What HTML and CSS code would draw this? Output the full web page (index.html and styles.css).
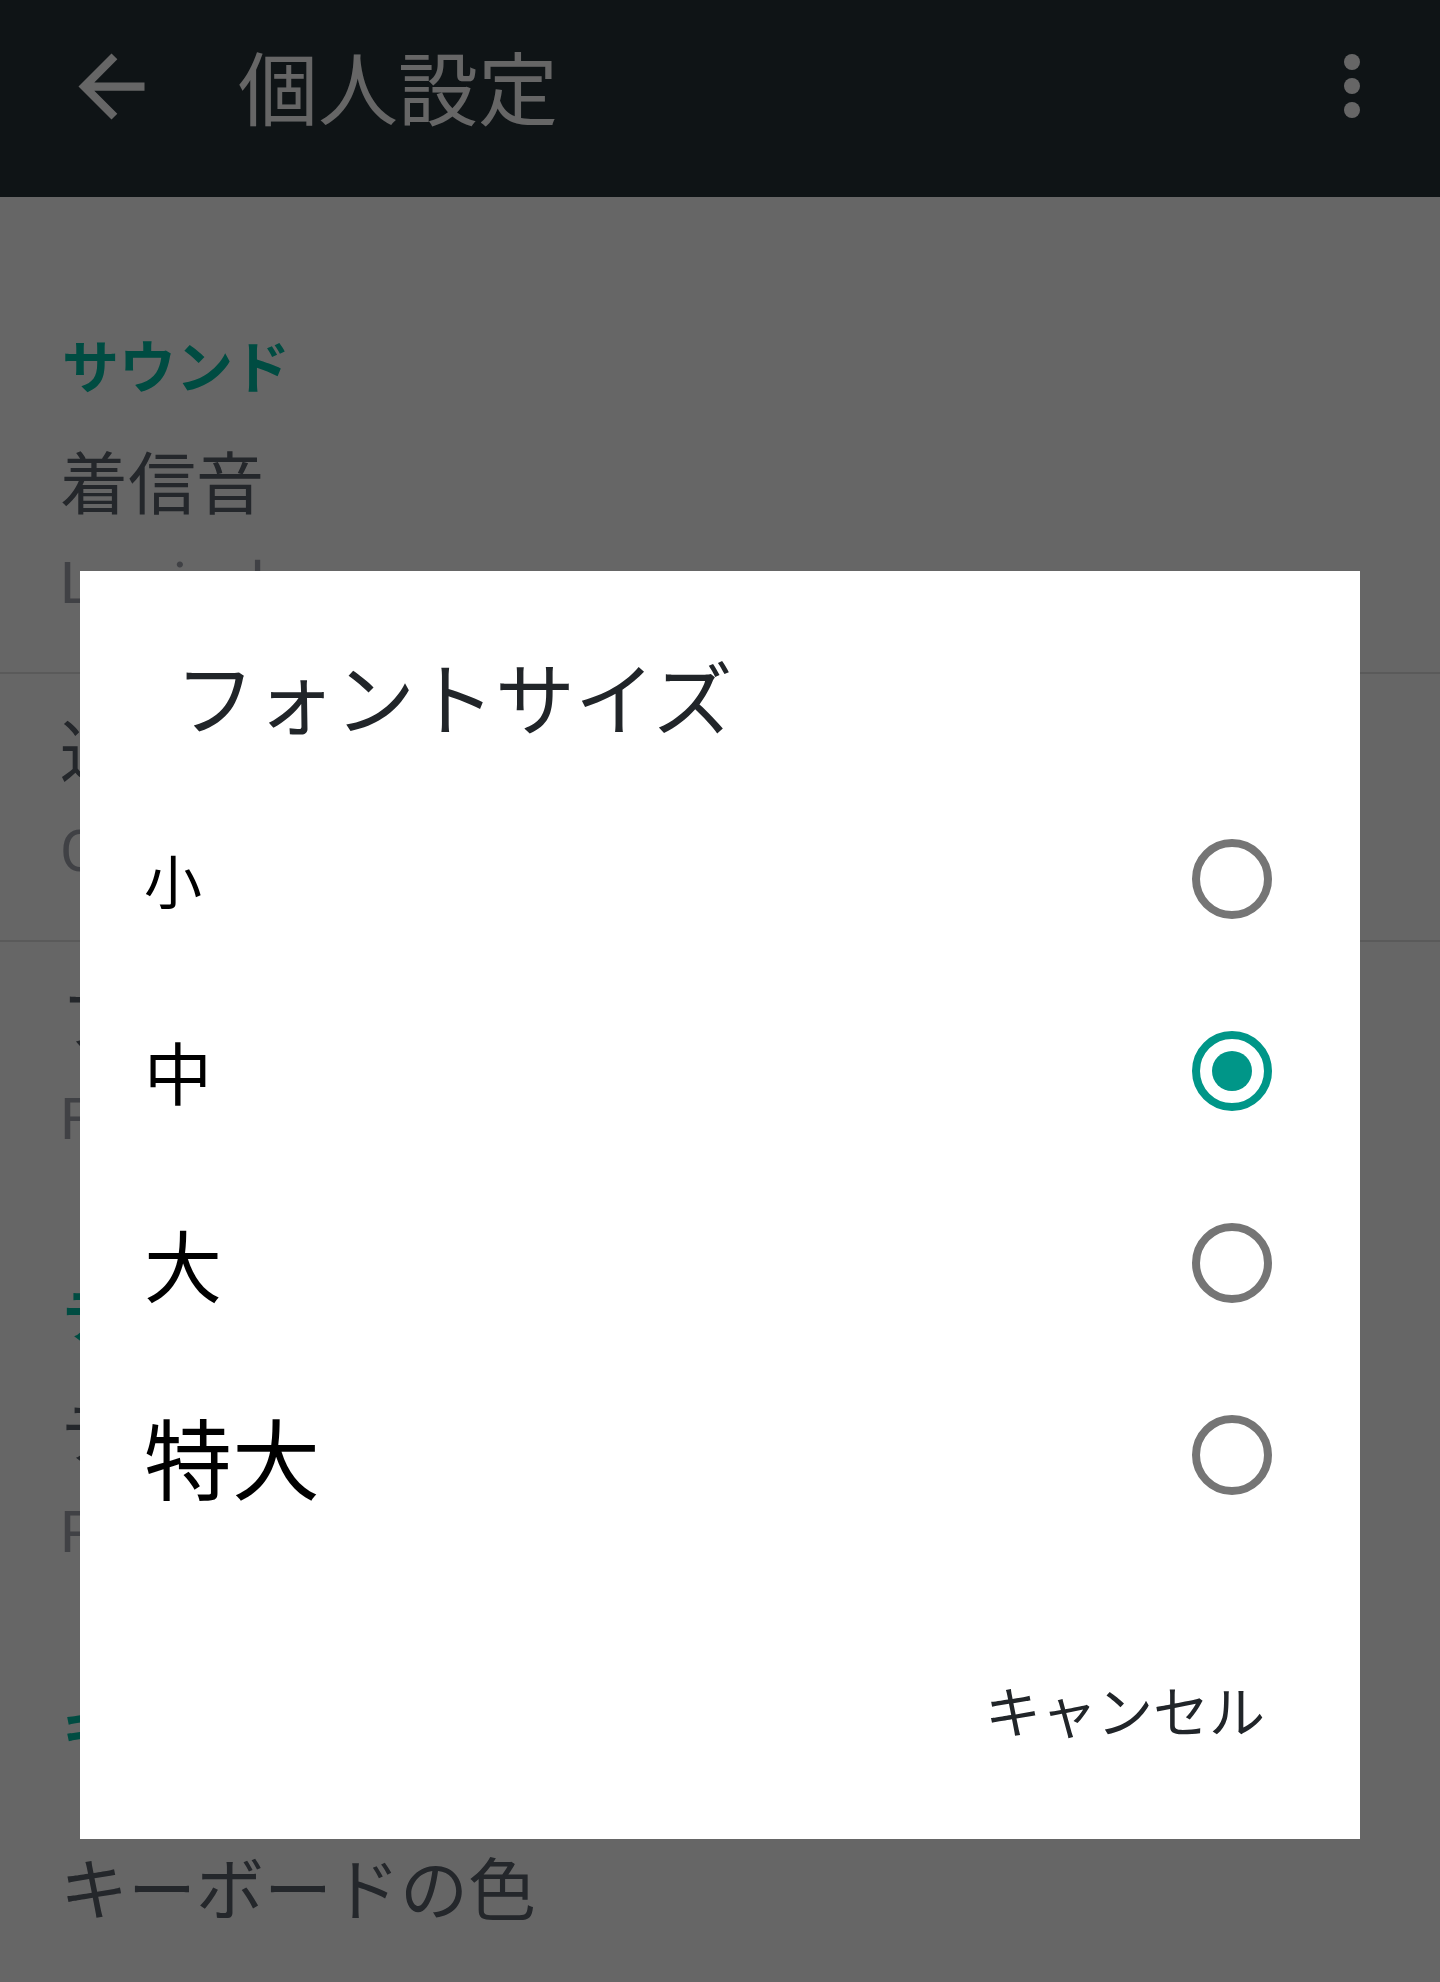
FILE: index.html
```html
<!DOCTYPE html>
<html lang="ja">
<head>
    <meta charset="UTF-8">
    <meta name="viewport" content="width=device-width, initial-scale=1.0">
    <title>個人設定</title>
    <link rel="stylesheet" href="styles.css">
</head>
<body>
    <header class="toolbar">
        <svg class="toolbar-back" viewBox="0 0 24 24"><path d="M20 11H7.83l5.59-5.59L12 4l-8 8 8 8 1.41-1.41L7.83 13H20v-2z"/></svg>
        <h1 class="toolbar-title">個人設定</h1>
        <div class="toolbar-menu"><span></span><span></span><span></span></div>
    </header>

    <main class="prefs">
        <section class="pref-group">
            <h2 class="pref-group-title">サウンド</h2>
            <div class="pref">
                <div class="pref-title">着信音</div>
                <div class="pref-summary">Luminal</div>
            </div>
            <div class="pref">
                <div class="pref-title">通知音</div>
                <div class="pref-summary">Orion</div>
            </div>
            <div class="pref">
                <div class="pref-title">フォントサイズ</div>
                <div class="pref-summary">Font size</div>
            </div>
        </section>

        <section class="pref-group">
            <h2 class="pref-group-title">テーマ</h2>
            <div class="pref">
                <div class="pref-title">テーマ</div>
                <div class="pref-summary">Pixel</div>
            </div>
        </section>

        <section class="pref-group">
            <h2 class="pref-group-title">キーボード</h2>
            <div class="pref pref-spaced">
                <div class="pref-title">キーボードの色</div>
            </div>
        </section>
    </main>

    <div class="scrim">
        <div class="dialog">
            <h3 class="dialog-title">フォントサイズ</h3>
            <ul class="choices">
                <li class="choice"><span class="choice-label size-s">小</span><span class="radio"></span></li>
                <li class="choice"><span class="choice-label size-m">中</span><span class="radio checked"></span></li>
                <li class="choice"><span class="choice-label size-l">大</span><span class="radio"></span></li>
                <li class="choice"><span class="choice-label size-xl">特大</span><span class="radio"></span></li>
            </ul>
            <div class="dialog-actions">
                <button class="dialog-btn">キャンセル</button>
            </div>
        </div>
    </div>
</body>
</html>
```

FILE: styles.css
```css
:root {
    --bar: #263238;
    --accent: #00bfa5;
    --radio-on: #009688;
    --radio-off: #757575;
    --ink: #212529;
}

body {
    margin: 0;
    height: 1982px;
    overflow: hidden;
    background: #fff;
    font-family: "Noto Sans CJK JP", "Noto Sans", sans-serif;
}

/* app bar */
.toolbar {
    display: flex;
    align-items: center;
    height: 197px;
    box-sizing: border-box;
    padding: 0 80px 25px 62px;
    background: var(--bar);
    color: #fff;
}

.toolbar-back {
    width: 99px;
    height: 99px;
    flex: none;
    fill: #fff;
}

.toolbar-title {
    flex: 1;
    margin: 0 0 5px 77px;
    font-size: 80px;
    font-weight: 400;
    line-height: 100px;
}

.toolbar-menu {
    display: flex;
    flex-direction: column;
    gap: 8px;
}

.toolbar-menu span {
    width: 16px;
    height: 16px;
    border-radius: 50%;
    background: #fff;
}

/* preference list */
.prefs {
    padding-top: 64px;
}

.pref-group-title {
    margin: 62px 0 3px;
    padding-left: 62px;
    font-size: 57px;
    font-weight: 700;
    line-height: 80px;
    color: var(--accent);
}

.pref {
    height: 268px;
    box-sizing: border-box;
    padding: 34px 0 0 60px;
    border-bottom: 2px solid #e0e0e0;
}

.pref-group .pref:last-child {
    border-bottom-color: transparent;
}

.pref-spaced {
    margin-top: 47px;
}

.pref-title {
    font-size: 68px;
    line-height: 80px;
    color: #5a616b;
}

.pref-summary {
    margin-top: 28px;
    font-family: Roboto, "Noto Sans CJK JP", sans-serif;
    font-size: 58px;
    line-height: 70px;
    color: #a0a4ad;
}

/* dialog */
.scrim {
    position: fixed;
    inset: 0;
    padding-top: 571px;
    background: rgba(0, 0, 0, 0.6);
}

.dialog {
    width: 1280px;
    height: 1268px;
    box-sizing: border-box;
    margin: 0 auto;
    padding-top: 73px;
    background: #fff;
}

.dialog-title {
    margin: 0;
    padding-left: 95px;
    font-size: 80px;
    font-weight: 400;
    line-height: 100px;
    color: var(--ink);
}

.choices {
    list-style: none;
    margin: 39px 0 0;
    padding: 0;
}

.choice {
    display: flex;
    align-items: center;
    justify-content: space-between;
    height: 192px;
    padding: 0 88px 0 64px;
}

.choice-label {
    line-height: 1;
    color: #000;
}

.size-s { font-size: 58px; }
.size-m { font-size: 68px; }
.size-l { font-size: 78px; }
.size-xl { font-size: 88px; }

.radio {
    display: grid;
    place-items: center;
    width: 80px;
    height: 80px;
    box-sizing: border-box;
    border: 8px solid var(--radio-off);
    border-radius: 50%;
}

.radio.checked {
    border-color: var(--radio-on);
}

.radio.checked::after {
    content: "";
    width: 40px;
    height: 40px;
    border-radius: 50%;
    background: var(--radio-on);
}

.dialog-actions {
    display: flex;
    justify-content: flex-end;
    padding: 118px 79px 0 0;
}

.dialog-btn {
    padding: 0 16px;
    border: none;
    background: none;
    font-family: inherit;
    font-size: 56px;
    line-height: 80px;
    color: var(--ink);
}
```
